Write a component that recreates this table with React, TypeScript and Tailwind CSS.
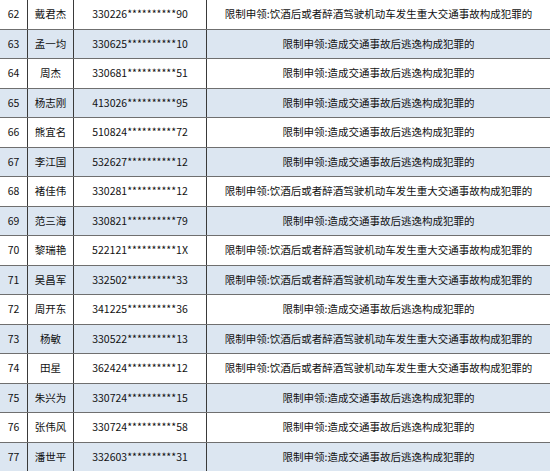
import React from "react";

const LONG = "限制申领:饮酒后或者醉酒驾驶机动车发生重大交通事故构成犯罪的";
const SHORT = "限制申领:造成交通事故后逃逸构成犯罪的";

const rows: [number, string, string, boolean][] = [
  [62, "戴君杰", "330226**********90", true],
  [63, "孟一均", "330625**********10", false],
  [64, "周杰", "330681**********51", false],
  [65, "杨志刚", "413026**********95", false],
  [66, "熊宜名", "510824**********72", false],
  [67, "李江国", "532627**********12", false],
  [68, "褚佳伟", "330281**********12", true],
  [69, "范三海", "330821**********79", false],
  [70, "黎瑞艳", "522121**********1X", true],
  [71, "吴昌军", "332502**********33", true],
  [72, "周开东", "341225**********36", false],
  [73, "杨敏", "330522**********13", true],
  [74, "田星", "362424**********12", true],
  [75, "朱兴为", "330724**********15", false],
  [76, "张伟风", "330724**********58", false],
  [77, "潘世平", "332603**********31", false],
];

export default function App() {
  return (
    <div
      className="w-[550px] h-[475px] overflow-hidden bg-white text-[#111] text-[10.5px]"
      style={{ fontFamily: '"Noto Sans CJK SC", "Noto Sans", sans-serif' }}
    >
      <div className="flex flex-col -mt-[1px]">
        {rows.map(([no, name, id, long], i) => (
          <div
            key={no}
            className={`flex h-[29.5px] shrink-0 border-t-[1.5px] border-[#6f6f6f] ${
              i % 2 === 1 ? "bg-[#dce6f1]" : "bg-white"
            }`}
          >
            <div className="w-[28px] shrink-0 flex items-center justify-center border-r border-[#3a3a3a]">
              {no}
            </div>
            <div className="w-[46px] shrink-0 flex items-center justify-center border-r border-[#3a3a3a]">
              {name}
            </div>
            <div className="w-[133px] shrink-0 flex items-center justify-center border-r border-[#3a3a3a]">
              {id}
            </div>
            <div className="w-[343px] shrink-0 flex items-center justify-center">
              {long ? LONG : SHORT}
            </div>
          </div>
        ))}
      </div>
    </div>
  );
}
